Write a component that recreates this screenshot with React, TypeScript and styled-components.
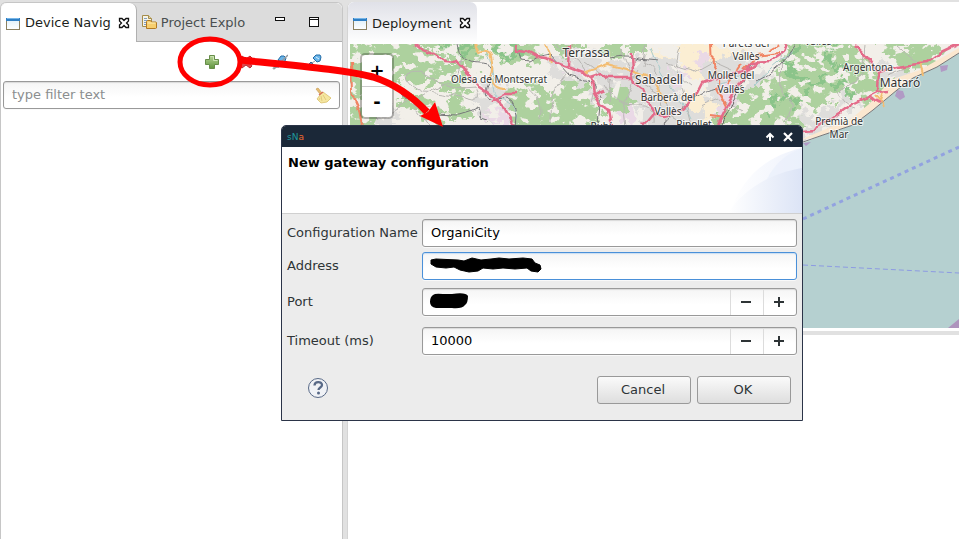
import React from "react";
import styled, { createGlobalStyle } from "styled-components";

const GlobalStyle = createGlobalStyle`
  * { box-sizing: border-box; }
  body {
    margin: 0;
    background: #e1e1e1;
    font-family: "DejaVu Sans", sans-serif;
    font-size: 13px;
    color: #2e3436;
  }
  button, input { font: inherit; color: inherit; }
`;

const Workbench = styled.div`
  position: relative;
  display: flex;
  gap: 4px;
  min-height: 100vh;
  padding-top: 2px;
  overflow: hidden;
`;

const SidePanel = styled.section`
  flex: none;
  width: 343px;
  display: flex;
  flex-direction: column;
  background: #fff;
  border: 1px solid #c6c6c6;
  border-bottom: 0;
  border-radius: 6px 6px 0 0;
`;

const MainColumn = styled.main`
  flex: 1;
  min-width: 0;
  display: flex;
  flex-direction: column;
  gap: 4px;
`;

const EditorPanel = styled.section`
  background: #fff;
  border-left: 1px solid #d4d4d4;
  padding-bottom: 3px;
  border-radius: 6px 0 0 0;
`;

const EmptyPanel = styled.section`
  flex: 1;
  background: #fff;
  border-left: 1px solid #d4d4d4;
`;

const TabStrip = styled.div<{ $plain?: boolean }>`
  display: flex;
  height: ${(p) => (p.$plain ? 42 : 39)}px;
  background: ${(p) => (p.$plain ? "#fff" : "#dcdcdc")};
  border-radius: 6px 6px 0 0;
`;

const Tab = styled.button<{ $kind: "active" | "idle" | "editor" }>`
  display: flex;
  align-items: center;
  gap: 4px;
  height: 100%;
  padding: 0 6px 0 4px;
  border: 0;
  white-space: nowrap;
  color: ${(p) => (p.$kind === "idle" ? "#4a4f50" : "#1c1f20")};
  background: ${(p) =>
    p.$kind === "active" ? "#fff" : p.$kind === "idle" ? "transparent" : "linear-gradient(#e0e1e8, #fff)"};
  border-right: ${(p) => (p.$kind === "active" ? "1px solid #b0b0b0" : "0")};
  border-bottom: ${(p) => (p.$kind === "idle" ? "1px solid #b0b0b0" : "0")};
  border-radius: ${(p) => (p.$kind === "idle" ? "0" : "6px 7px 0 0")};
`;

const TabLabel = styled.span`
  padding-right: 3px;
`;

const StripControls = styled.div`
  flex: 1;
  display: flex;
  justify-content: flex-end;
  align-items: center;
  gap: 22px;
  padding-right: 22px;
  border-bottom: 1px solid #b0b0b0;
`;

const IconButton = styled.button`
  display: flex;
  padding: 0;
  border: 0;
  background: none;
`;

const Toolbar = styled.div`
  display: flex;
  justify-content: flex-end;
  align-items: center;
  gap: 18px;
  height: 39px;
  padding-right: 20px;
`;

const FieldFrame = styled.div<{ $focused?: boolean; $spin?: boolean }>`
  position: relative;
  display: flex;
  align-items: stretch;
  height: 28px;
  margin: ${(p) => (p.$spin ? "3px 0" : "0")};
  border: 1px solid ${(p) => (p.$focused ? "#4a90d9" : "#999")};
  border-radius: 3px;
  background: linear-gradient(#f5f5f5, #fff 60%);
  box-shadow: inset 0 1px 1px ${(p) => (p.$focused ? "#c9def3" : "#dadada")}, 0 1px 0 #f9f9f9;
  overflow: hidden;
`;

const TextInput = styled.input`
  flex: 1;
  min-width: 0;
  padding: 0 8px 2px;
  border: 0;
  outline: 0;
  background: transparent;
  color: #000;
  &::placeholder { color: #8b8e8f; opacity: 1; }
`;

const FilterRow = styled.div`
  padding: 0 2px;
  ${IconButton} { align-items: center; padding-right: 7px; }
`;

const StepButton = styled.button`
  width: 33px;
  padding: 0 2px 0 0;
  border: 0;
  border-left: 1px solid #dcdcdc;
  background: transparent;
  display: flex;
  align-items: center;
  justify-content: center;
`;

const MapView = styled.div`
  position: relative;
  margin-left: 2px;
  height: 284px;
  overflow: hidden;
  background: #b5d0d0;
`;

const MapDrawing = styled.svg`
  display: block;
  width: 100%;
  height: 100%;
`;

const ZoomControl = styled.div`
  position: absolute;
  left: 10px;
  top: 9px;
  width: 34px;
  border: 2px solid rgba(0, 0, 0, 0.25);
  border-radius: 5px;
  background: #fff;
  background-clip: padding-box;
`;

const ZoomButton = styled.button`
  display: block;
  width: 100%;
  height: 31px;
  padding: 0;
  border: 0;
  background: transparent;
  color: #000;
  font: bold 18px/30px "DejaVu Sans", sans-serif;
  & + & { border-top: 1px solid #ccc; }
`;

const Dialog = styled.div`
  position: absolute;
  left: 281px;
  top: 125px;
  width: 522px;
  border: 1px solid #2b3448;
  border-radius: 5px 5px 0 0;
  background: #ececec;
  overflow: hidden;
`;

const TitleBar = styled.div`
  display: flex;
  align-items: center;
  justify-content: flex-end;
  gap: 8px;
  height: 21px;
  padding: 0 9px 0 5px;
  background: #1b2838;
`;

const Brand = styled.span`
  margin-right: auto;
  font-size: 9px;
  color: #20999c;
  em { font-style: normal; color: #f0692f; }
`;

const DialogHeader = styled.header`
  display: flex;
  justify-content: space-between;
  height: 67px;
  padding-left: 6px;
  background: #fff;
  border-bottom: 1px solid #d0d0d0;
  h1 {
    margin: 8px 0 0;
    font-size: 13px;
    line-height: 16px;
    color: #000;
  }
`;

const Form = styled.form`
  padding: 5px;
`;

const Fields = styled.div`
  display: grid;
  grid-template-columns: 130px 1fr;
  gap: 5px;
  align-items: center;
  label { white-space: nowrap; padding-bottom: 2px; }
`;

const Actions = styled.div`
  display: flex;
  align-items: center;
  gap: 6px;
  padding: 18px 6px 11px 20px;
`;

const HelpButton = styled(IconButton)`
  margin-right: auto;
  padding-bottom: 4px;
`;

const ActionButton = styled.button`
  width: 94px;
  height: 28px;
  padding: 0 2px 2px 0;
  border: 1px solid #999;
  border-radius: 3px;
  background: linear-gradient(#fafafa, #dedede);
`;

const Redaction = styled.svg`
  position: absolute;
  left: 6px;
  top: 4px;
`;

const Annotation = styled.svg`
  position: absolute;
  left: 0;
  top: 0;
  pointer-events: none;
`;

const WindowIcon = () => (
  <svg width="16" height="16" viewBox="0 0 16 16">
    <defs>
      <linearGradient id="pane" x1="0" y1="0" x2="0" y2="1">
        <stop offset="0" stopColor="#dceefa" />
        <stop offset="1" stopColor="#fff" />
      </linearGradient>
    </defs>
    <rect x="1.5" y="3.5" width="13" height="11" fill="url(#pane)" stroke="#8a8060" />
    <rect x="1" y="3" width="14" height="3" fill="#2f7fc4" />
    <path d="M2 3.5h12" stroke="#77b6e8" />
  </svg>
);

const FolderIcon = () => (
  <svg width="16" height="16" viewBox="0 0 16 16">
    <path d="M1.5 1.500h6l3 3v8h-9z" fill="#f6f3e6" stroke="#a58c4a" />
    <path d="M7.500 1.500v3h3" fill="#e2d3a0" stroke="#a58c4a" />
    <path d="M3 4.500h3M3 6.500h5M3 8.500h4M3 10.500h3" stroke="#7f9fc4" />
    <path d="M5.500 14.500v-7l1-1h3l1 1.500h4.500l.5.500v5.500l-1 .500z" fill="#f7ce6d" stroke="#b27a24" />
    <path d="M6.500 9h8" stroke="#fff0b8" />
  </svg>
);

const CloseTabIcon = () => (
  <svg width="12" height="12" viewBox="0 0 12 12">
    <path
      d="M1.500 1.500h2.500l2 2 2-2h2.500v2.500l-2 2 2 2v2.500H8l-2-2-2 2H1.500V8l2-2-2-2z"
      fill="#fff"
      stroke="#111"
      strokeWidth="1.300"
    />
  </svg>
);

const AddIcon = () => (
  <svg width="16" height="16" viewBox="0 0 16 16">
    <defs>
      <linearGradient id="leaf" x1="0" y1="0" x2="0" y2="1">
        <stop offset="0" stopColor="#b9d797" />
        <stop offset="1" stopColor="#60943f" />
      </linearGradient>
    </defs>
    <path d="M5.500 1.500h5v4h4v5h-4v4h-5v-4h-4v-5h4z" fill="url(#leaf)" stroke="#668d49" />
    <path d="M6.500 2.500h3v4h4" fill="none" stroke="#cde3b6" />
  </svg>
);

const DeleteIcon = () => (
  <svg width="16" height="16" viewBox="0 0 16 16">
    <path d="M2 4l2-2 4 3 4-3 2 2-3 4 3 4-2 2-4-3-4 3-2-2 3-4z" fill="#e2474c" stroke="#b92c33" />
  </svg>
);

const CrossedPlugIcon = () => (
  <svg width="16" height="16" viewBox="0 0 16 16">
    <path d="M1 15l3-3" stroke="#a5abaf" strokeWidth="2" />
    <path d="M3 11l3-3 3 3-2 2H4z" fill="#5e94c8" stroke="#316699" />
    <path d="M6 6l3-4h3l2 2-1 3-3 2z" fill="#69b4e8" stroke="#236ca7" />
    <path d="M2 15L16 1" stroke="#93989b" strokeWidth="1.500" />
  </svg>
);

const PlugIcon = () => (
  <svg width="16" height="16" viewBox="0 0 16 16">
    <path d="M1 14l3-3" stroke="#909aa3" strokeWidth="2" />
    <path d="M3 10l2-2 3 3-2 2H4z" fill="#5e94c8" stroke="#316699" />
    <path d="M7 4l3-3h4l1 2-1 4-3 1z" fill="#69b4e8" stroke="#236ca7" />
    <path d="M10 3l3 2" stroke="#d9f0ff" />
    <path d="M6 9l3-2" stroke="#909aa3" />
  </svg>
);

const BroomIcon = () => (
  <svg width="17" height="17" viewBox="0 0 17 17">
    <path d="M1 2l2-1 4 5-2 1z" fill="#e7bd72" stroke="#c99f57" strokeWidth=".7" />
    <path d="M8 5l8 6-4 4-6 1-4-4 3-4z" fill="#f5e6a0" stroke="#d9c06c" strokeWidth=".8" />
    <path d="M4 8l4-3" stroke="#d9735e" strokeWidth="1.500" />
    <path d="M6 9l1 5M8 8l3 5M5 11l-1 2" stroke="#dcc374" strokeWidth=".8" />
  </svg>
);

const MinimizeIcon = () => (
  <svg width="12" height="12" viewBox="0 0 12 12">
    <rect x="1.500" y="1.500" width="9" height="3" fill="#fff" stroke="#111" />
  </svg>
);

const MaximizeIcon = () => (
  <svg width="12" height="12" viewBox="0 0 12 12">
    <rect x="1.500" y="1.500" width="9" height="9" fill="#fff" stroke="#111" />
    <path d="M1 3.500h10" stroke="#111" />
  </svg>
);

const MinusGlyph = () => (
  <svg width="10" height="10" viewBox="0 0 10 10">
    <path d="M0 5h10" stroke="#2e3436" strokeWidth="2" />
  </svg>
);

const PlusGlyph = () => (
  <svg width="10" height="10" viewBox="0 0 10 10">
    <path d="M0 5h10M5 0v10" stroke="#2e3436" strokeWidth="2" />
  </svg>
);

const HelpIcon = () => (
  <svg width="22" height="22" viewBox="0 0 22 22">
    <circle cx="11" cy="11" r="9.500" fill="#f0f2f6" stroke="#586987" />
    <path d="M7.500 8.500c0-4.500 7.500-4.500 7.500-.5 0 2.500-3.500 2.500-3.500 5" fill="none" stroke="#586987" strokeWidth="2.300" />
    <circle cx="11.500" cy="16" r="1.500" fill="#586987" />
  </svg>
);

const HeaderBanner = () => (
  <svg width="76" height="66" viewBox="0 0 76 66">
    <defs>
      <linearGradient id="sweep">
        <stop offset="0" stopColor="#fff" />
        <stop offset="1" stopColor="#dce4f6" />
      </linearGradient>
      <linearGradient id="glow">
        <stop offset="0" stopColor="#fff" />
        <stop offset="1" stopColor="#eef2fc" />
      </linearGradient>
    </defs>
    <path d="M4 66C16 28 44 8 76 1v65z" fill="url(#glow)" />
    <path d="M41 32C49 16 61 6 76 2v30z" fill="#e9effb" opacity=".7" />
    <path d="M2 66C19 40 47 26 76 21v45z" fill="url(#sweep)" />
  </svg>
);

const URBAN = [
  "M545 62l25-14 40 4 20 20-5 22-35 6-25-14z",
  "M632 62l35-8 18 24-8 30-35 2-18-18z",
  "M646 100l40 4 20 12-10 12h-56z",
  "M700 62l40-8 34 20-22 30-42 2z",
  "M474 84l30-6 22 14-4 34-34-2-12-20z",
  "M790 108l30 4 24-18 24 4-38 32-30 8z",
  "M858 60l40 2 20 14-24 16-30-2z",
  "M362 84l24 8 14 28-36 4z",
];
const FARM = [
  "M676 44h42l-4 36-28-2z",
  "M688 92l30 6-10 26-26-2z",
  "M712 48l36 4-8 22-24 4z",
  "M652 48l18 4 4 14-20 2z",
];
const INDUSTRY = [
  "M668 68l22 6-6 14-16-4z",
  "M724 84l14 2-14 30-10-4z",
  "M570 66l16 2-8 12z",
  "M488 104l18 4 8 18h-24z",
  "M692 50l18 6-8 14z",
  "M618 104l20 4-4 14-14-2z",
  "M866 66l12 6-4 14-12-4z",
];
const FOREST = [
  "M344 38h70l24 18 28 12-6 10-46-9-16 8-6 22-20 6 2 22h-30z",
  "M412 38h72l4 18-14 12-22-8-16-10z",
  "M384 62l30 4 34 8 26 18-10 10-30-16-26-2-24-10z",
  "M400 90l24 4 22 18 10 10-20 4-20-14-16-6z",
  "M490 38h30l26 14-10 14-28-4-14-8z",
  "M556 40h32l-20 14-12 2z",
  "M508 88l30-6 10 12 20-12 20 6-2 20-20 20h-46l-12-20z",
  "M570 98l24 2 10 28h-38z",
  "M600 92l24-6 12 16-16 14-14-4z",
  "M596 48l22-8 10 14-20 6z",
  "M630 40h18l-4 14-14 2z",
  "M446 96l26 8-4 20-20-10z",
  "M754 84l22-6 14-40h46l32 20 22 26-20 20-24-12-26 14-20-2-14 24h-44l-16-14 14-14 22 4z",
  "M736 94l20-10 20 8-14 24-20 2z",
  "M876 42h46l26 8-24 18-30 2z",
  "M764 98l40 4-8 30h-56l10-16z",
  "M716 114l22-2 10 16h-32z",
];
const DEEP_FOREST = [
  "M800 46q-16 14-12 22t14 8q4 8 24 6t26 16",
  "M768 114q-4-12 10-16t22 6q10-8 6-18",
  "M832 46q-12 12 2 18t14 8",
  "M442 44q14 16 34 0",
  "M493 48l13-4 13 8-8 6z",
];
const MINOR = [
  "M405 74q16-8 30 5t42 9q7 10-5 12-32-8-50-8-18-8-17-18",
  "M462 61q-4 18-14 22t-34 18",
  "M516 78q30 18 24 40M566 74q-18 18-16 50",
  "M622 47q4 30 30 42t12 38M642 62q20 8 18 30t22 30",
  "M678 48q-10 22 14 38M667 64l28 8 18-10 18 8",
  "M605 84q10 20 30 20t18 20M640 70q-20 30-14 56",
  "M781 52l1 40 10 12-8 20M836 88q8 18 20 20",
  "M866 44l-3 30-22 18M920 64l-22-18M886 76l20-8",
  "M554 44l24 16 16 26-4 16M584 62l28 20-2 20",
  "M372 70q-10 30 6 50M390 115l18-16 20 27",
  "M700 106l18-8 24 12M682 88l10 38M646 44l-4 22",
];
const RAIL = [
  "M457 44q2 20 22 19t9 20 20 14q12 6 8 30",
  "M518 50l3 10 10 1 9-5 10-2 20 22 18 5q15 14 12 22l-2 25",
  "M610 58q20-4 28 0l20 2M664 124q14-18 38-30t26-2l14-10 10-20",
  "M395 84l12 15 26 15 26 1 10-3 9-4 3 10 7 2",
  "M796 44q-16 28-40 38",
];
const COAST_RAIL = ["M803 142l20-7 30-10 20-15 24-20 16-12 24-11 22-14"];
const TRUNK = [
  "M712 44l1 22q10 13 4 22l9 17",
  "M742 64l-14 20M768 50l10-6M743 70l14-14 22-3",
  "M710 115l16 2",
  "M351 62l1 30 6 14 4 20",
];
const SECONDARY = [
  "M474 44l4 8q10-4 13 5t-1 20q2 12 16 12",
  "M583 73l24-9 26 7 20 8 14 24",
  "M545 44l8 20",
  "M876 96l8 10M884 92l-4 12M920 62l4 12",
];
const PRIMARY = [
  "M415 44l7 6 13 5 9 6 13 1 13 13 10 12 12 8 8 7 5 10 7 11 8 5",
  "M491 101l12-7h14",
  "M517 44l1 7 10 1 9 5 10 1 10 5 13 5 13 5 7 5 3 15 7 12 10 5 3 16",
  "M590 78l12-4 6 4 25 0M632 52l1 20q1 15 10 18l5 12 6 12 12 2 16-8 14-13 6-12 14-5 18-4 16-5 8-7",
  "M717 126l11-22 12-21 10-20 20-1 13-9 3-9",
  "M568 66l1-22M594 93l10-4M653 114l-10 12",
  "M855 44l12 12 11 16-1 20-24 12-26 18-14 9-10 1",
  "M878 72l19-5 30-4 13-10 19-9M876 92l14-1M867 96l14 8",
];
const RIVERS = [
  "M484 50q14 20 8 32t22 22l6 22",
  "M650 48q10 26 24 44t18 28",
  "M716 84q20-4 30-14",
  "M755 85q18-20 38-33",
];
const COAST_TOWNS = "M800 140l52-22 22-18 16-20 30-10 39-22v6l-22 14-24 11-16 12-24 20-20 15-30 10z";

type PlaceName = { x: number; y: number; size: number; name: string };
const PLACES: PlaceName[] = [
  { x: 499, y: 83, size: 10, name: "Olesa de Montserrat" },
  { x: 586, y: 57, size: 12, name: "Terrassa" },
  { x: 659, y: 84, size: 12, name: "Sabadell" },
  { x: 668, y: 101, size: 10, name: "Barberà del" },
  { x: 668, y: 115, size: 10, name: "Vallès" },
  { x: 694, y: 128, size: 10, name: "Ripollet" },
  { x: 601, y: 130, size: 10, name: "Rubí" },
  { x: 746, y: 47, size: 10, name: "Parets del" },
  { x: 746, y: 60, size: 10, name: "Vallès" },
  { x: 731, y: 79, size: 10, name: "Mollet del" },
  { x: 731, y: 93, size: 10, name: "Vallès" },
  { x: 818, y: 45, size: 10, name: "Vallès" },
  { x: 868, y: 71, size: 10, name: "Argentona" },
  { x: 900, y: 87, size: 12, name: "Mataró" },
  { x: 839, y: 125, size: 10, name: "Premià de" },
  { x: 839, y: 138, size: 10, name: "Mar" },
];

const Lines = ({ paths, color, width }: { paths: string[]; color: string; width: number }) => (
  <g fill="none" stroke={color} strokeWidth={width} strokeLinejoin="round">
    {paths.map((d) => (
      <path key={d} d={d} />
    ))}
  </g>
);

const Areas = ({ paths, color }: { paths: string[]; color: string }) => (
  <g fill={color}>
    {paths.map((d) => (
      <path key={d} d={d} />
    ))}
  </g>
);

const CoastMap = () => (
  <MapDrawing viewBox="350 44 609 284" preserveAspectRatio="xMinYMin slice" aria-label="Coast map">
    <defs>
      <filter id="rough" colorInterpolationFilters="sRGB" x="-5%" y="-10%" width="110%" height="120%">
        <feTurbulence type="fractalNoise" baseFrequency="0.100" numOctaves="4" seed="7" />
        <feDisplacementMap in="SourceGraphic" scale="26" xChannelSelector="R" yChannelSelector="G" />
      </filter>
      <filter id="wander" colorInterpolationFilters="sRGB">
        <feTurbulence type="fractalNoise" baseFrequency="0.070" numOctaves="2" seed="3" />
        <feDisplacementMap in="SourceGraphic" scale="8" xChannelSelector="R" yChannelSelector="G" />
      </filter>
      <filter id="patches" colorInterpolationFilters="sRGB" x="0" y="0" width="100%" height="100%">
        <feTurbulence type="fractalNoise" baseFrequency="0.080 0.110" numOctaves="4" seed="12" />
        <feColorMatrix values="0 0 0 0 0  0 0 0 0 0  0 0 0 0 0  16 0 0 0 -8.800" />
        <feComposite in="SourceGraphic" operator="in" />
      </filter>
      <clipPath id="land">
        <path d="M350 44h609v9l-22 14-24 11-16 12-24 20-20 15-30 10-20 8v30H350z" />
      </clipPath>
    </defs>
    <rect x="350" y="44" width="609" height="284" fill="#b5d0d0" />
    <g clipPath="url(#land)">
      <rect x="350" y="44" width="609" height="130" fill="#f2efe9" />
      <g filter="url(#rough)">
        <Areas paths={FARM} color="#fbeed3" />
        <Areas paths={URBAN} color="#dedddb" />
        <Areas paths={INDUSTRY} color="#ead9e6" />
        <Areas paths={FOREST} color="#add19e" />
        <Lines paths={DEEP_FOREST} color="#8bc48a" width={5} />
      </g>
      <path d="M350 44h280l-20 84H350zM750 44h180l-90 84h-110z" fill="#f2efe9" filter="url(#patches)" />
      <path d={COAST_TOWNS} fill="#fbe7cf" />
      <g filter="url(#wander)">
        <Lines paths={RIVERS} color="#a9cccc" width={1} />
        <Lines paths={MINOR} color="#b8b6b3" width={1} />
      </g>
    </g>
    <path d="M897 90l6 1 2 6-5 3-5-4zM940 66l8-1-1 5-6 2zM803 143l8-1-5 4z" fill="#b19ac5" />
    <Lines paths={COAST_RAIL} color="#77777a" width={1} />
    <g filter="url(#wander)">
      <Lines paths={RAIL} color="#77777a" width={1} />
      <Lines paths={SECONDARY} color="#f3bd72" width={2} />
      <Lines paths={TRUNK} color="#f08463" width={2} />
      <Lines paths={PRIMARY} color="#e46c8a" width={2.5} />
      <path d="M720 126l22-41" stroke="#666" />
    </g>
    <path d="M803 219L959 147" stroke="#8d9be3" strokeWidth="3" strokeDasharray="4 4" opacity=".85" />
    <path d="M803 265l156 8" stroke="#8d9be3" strokeDasharray="5 3" />
    <path d="M948 328l11-9v9z" fill="#ae94bd" />
    <g
      fontFamily='"Noto Sans", sans-serif'
      textAnchor="middle"
      fill="#333"
      stroke="#fff"
      strokeWidth="2"
      strokeOpacity=".7"
      strokeLinejoin="round"
      paintOrder="stroke"
    >
      {PLACES.map((p) => (
        <text key={`${p.name}-${p.x}-${p.y}`} x={p.x} y={p.y} fontSize={p.size}>
          {p.name}
        </text>
      ))}
    </g>
  </MapDrawing>
);

const SpinField = ({ id, value, children }: { id: string; value?: string; children?: React.ReactNode }) => (
  <FieldFrame $spin>
    <TextInput id={id} defaultValue={value} />
    <StepButton type="button" aria-label="Decrease">
      <MinusGlyph />
    </StepButton>
    <StepButton type="button" aria-label="Increase">
      <PlusGlyph />
    </StepButton>
    {children}
  </FieldFrame>
);

export default function App() {
  return (
    <>
      <GlobalStyle />
      <Workbench>
        <SidePanel>
          <TabStrip>
            <Tab $kind="active">
              <WindowIcon />
              <TabLabel>Device Navig</TabLabel>
              <CloseTabIcon />
            </Tab>
            <Tab $kind="idle">
              <FolderIcon />
              Project Explo
            </Tab>
            <StripControls>
              <IconButton aria-label="Minimize">
                <MinimizeIcon />
              </IconButton>
              <IconButton aria-label="Maximize">
                <MaximizeIcon />
              </IconButton>
            </StripControls>
          </TabStrip>
          <Toolbar>
            <IconButton aria-label="Add">
              <AddIcon />
            </IconButton>
            <IconButton aria-label="Delete">
              <DeleteIcon />
            </IconButton>
            <IconButton aria-label="Disconnect">
              <CrossedPlugIcon />
            </IconButton>
            <IconButton aria-label="Connect">
              <PlugIcon />
            </IconButton>
          </Toolbar>
          <FilterRow>
            <FieldFrame>
              <TextInput aria-label="Filter" placeholder="type filter text" />
              <IconButton aria-label="Clear filter">
                <BroomIcon />
              </IconButton>
            </FieldFrame>
          </FilterRow>
        </SidePanel>
        <MainColumn>
          <EditorPanel>
            <TabStrip $plain>
              <Tab $kind="editor">
                <WindowIcon />
                <TabLabel>Deployment</TabLabel>
                <CloseTabIcon />
              </Tab>
            </TabStrip>
            <MapView>
              <CoastMap />
              <ZoomControl>
                <ZoomButton>+</ZoomButton>
                <ZoomButton>-</ZoomButton>
              </ZoomControl>
            </MapView>
          </EditorPanel>
          <EmptyPanel />
        </MainColumn>
        <Dialog role="dialog" aria-labelledby="dialog-title">
          <TitleBar>
            <Brand>
              sN<em>a</em>
            </Brand>
            <IconButton aria-label="Shade">
              <svg width="10" height="10" viewBox="0 0 10 10">
                <path d="M5 9V2M1.500 5.500L5 2l3.500 3.500" fill="none" stroke="#fff" strokeWidth="2" />
              </svg>
            </IconButton>
            <IconButton aria-label="Close">
              <svg width="10" height="10" viewBox="0 0 10 10">
                <path d="M1 1l8 8M9 1L1 9" stroke="#fff" strokeWidth="2.200" />
              </svg>
            </IconButton>
          </TitleBar>
          <DialogHeader>
            <h1 id="dialog-title">New gateway configuration</h1>
            <HeaderBanner />
          </DialogHeader>
          <Form>
            <Fields>
              <label htmlFor="name">Configuration Name</label>
              <FieldFrame>
                <TextInput id="name" defaultValue="OrganiCity" />
              </FieldFrame>
              <label htmlFor="address">Address</label>
              <FieldFrame $focused>
                <TextInput id="address" />
                <Redaction width="114" height="18" viewBox="0 0 114 18">
                  <path
                    d="M2 3l5-1 22 1 6 1 8-3 9 2 10-1 8-1 10 1 14-1 9 1 3 4 5 2 1 4-3 3-7-1-4-3-12 1-12-1-10 1-10-1-5 3-9 1-9-2-6-3-8 1-10-1-5-3z"
                    fill="#000"
                    stroke="#000"
                    strokeLinejoin="round"
                  />
                </Redaction>
              </FieldFrame>
              <label htmlFor="port">Port</label>
              <SpinField id="port">
                <Redaction width="40" height="18" viewBox="0 0 40 18">
                  <path d="M4 2q2-2 10-1h9q14-2 16 2 0 7-3 9-3 4-13 3H7q-6-1-6-6 0-5 3-7z" fill="#000" />
                </Redaction>
              </SpinField>
              <label htmlFor="timeout">Timeout (ms)</label>
              <SpinField id="timeout" value="10000" />
            </Fields>
            <Actions>
              <HelpButton type="button" aria-label="Help">
                <HelpIcon />
              </HelpButton>
              <ActionButton type="button">Cancel</ActionButton>
              <ActionButton type="button">OK</ActionButton>
            </Actions>
          </Form>
        </Dialog>
        <Annotation width="460" height="140" viewBox="0 0 460 140">
          <ellipse cx="210" cy="62" rx="30" ry="23" fill="none" stroke="#f00" strokeWidth="5" />
          <path d="M240 60C310 67 345 70 373 77c22 7 40 20 54 35" fill="none" stroke="#f00" strokeWidth="7" />
          <path d="M443 127l-23-11 8-4 7-10z" fill="#f00" />
        </Annotation>
      </Workbench>
    </>
  );
}
